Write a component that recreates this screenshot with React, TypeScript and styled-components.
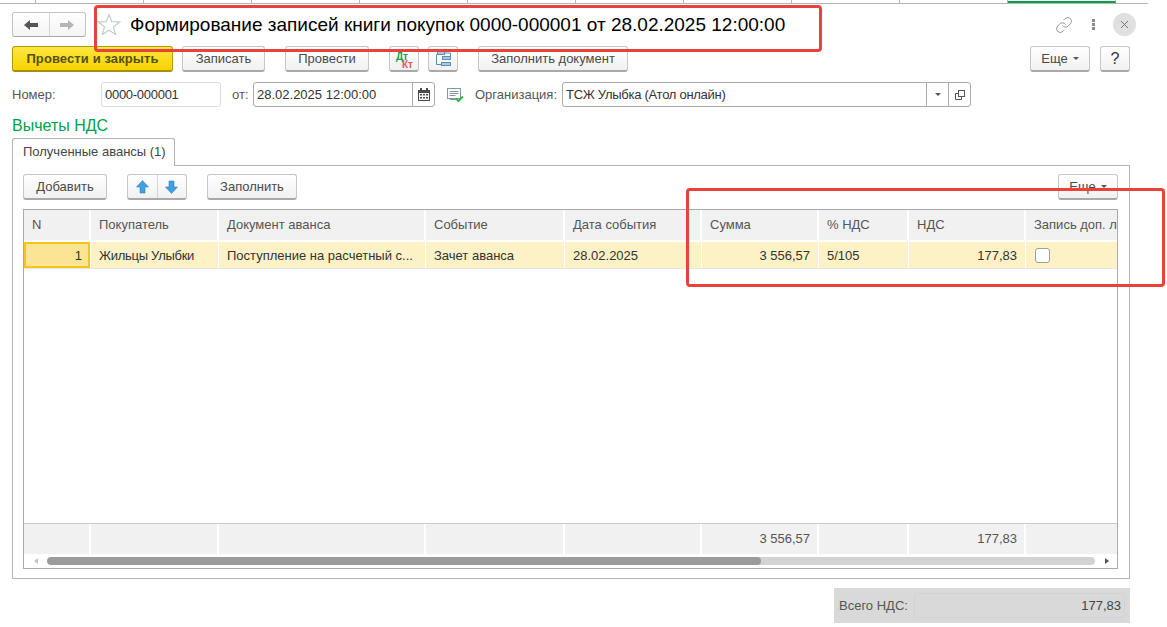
import styled, { createGlobalStyle } from 'styled-components';
import { Link } from 'lucide-react';

const GlobalStyle = createGlobalStyle`
  html, body {
    margin: 0;
    padding: 0;
    background: #fff;
  }
  body {
    font-family: "Liberation Sans", Arial, sans-serif;
    font-size: 13px;
    color: #4a4a4a;
  }
`;

const Page = styled.div`
  position: relative;
  width: 1167px;
  height: 627px;
  overflow: hidden;
  background: #fff;
`;

const TopStrip = styled.div`
  display: flex;
  width: 1148px;
  height: 4px;
  box-sizing: border-box;
  border-bottom: 1px solid #b5b5b5;
`;

const StripCell = styled.div<{ $first?: boolean; $active?: boolean }>`
  box-sizing: border-box;
  flex: 0 0 ${p => (p.$first ? 36 : 108)}px;
  border-right: 1px solid #b5b5b5;
  ${p => p.$active && 'border-bottom: 2px solid #00a04a;'}
`;

const Content = styled.div`
  padding: 8px 37px 0 12px;
  display: flex;
  flex-direction: column;
`;

const TitleRow = styled.div`
  display: flex;
  align-items: center;
  height: 25px;
`;

const NavGroup = styled.div`
  display: flex;
  width: 74px;
  height: 25px;
  box-sizing: border-box;
  border: 1px solid #c4c4c4;
  border-bottom-color: #a8a8a8;
  border-radius: 3px;
  background: linear-gradient(#fff, #f4f4f4);
`;

const NavBtn = styled.div<{ $divided?: boolean }>`
  flex: 1;
  display: flex;
  align-items: center;
  justify-content: center;
  ${p => p.$divided && 'border-left: 1px solid #d4d4d4;'}
`;

const StarWrap = styled.div`
  margin-left: 10px;
  width: 26px;
  height: 25px;
  display: flex;
  align-items: center;
  justify-content: center;
`;

const Title = styled.h1`
  margin: 0 0 0 8px;
  font-size: 19px;
  line-height: 25px;
  font-weight: 400;
  color: #000;
  white-space: nowrap;
  flex: 1;
`;

const LinkIcon = styled(Link)`
  color: #8a8a8a;
  margin-right: 19px;
`;

const Dots = styled.div`
  display: flex;
  flex-direction: column;
  gap: 1px;
  margin-right: 18px;
`;

const Dot = styled.span`
  width: 3px;
  height: 3px;
  background: #8c8c8c;
`;

const CloseBtn = styled.div`
  width: 23px;
  height: 23px;
  border-radius: 50%;
  background: #e0e0e0;
  color: #777;
  display: flex;
  align-items: center;
  justify-content: center;
  margin-right: -6px;
`;

const Toolbar = styled.div`
  display: flex;
  align-items: stretch;
  height: 26px;
  margin-top: 9px;
`;

const Btn = styled.div<{ $w: number; $gap?: number; $primary?: boolean; $push?: boolean }>`
  box-sizing: border-box;
  width: ${p => p.$w}px;
  height: 26px;
  margin-left: ${p => p.$push ? 'auto' : `${p.$gap ?? 0}px`};
  display: flex;
  align-items: center;
  justify-content: center;
  gap: 5px;
  border: 1px solid ${p => (p.$primary ? '#b49b10' : '#c6c6c6')};
  border-bottom: 2px solid ${p => (p.$primary ? '#a88f0c' : '#a9a9a9')};
  border-radius: 3px;
  background: ${p => p.$primary ? 'linear-gradient(#ffe640, #f7d300)' : 'linear-gradient(#fff, #f1f1f1)'};
  color: ${p => (p.$primary ? '#55500f' : '#4a4a4a')};
  font-weight: ${p => (p.$primary ? 700 : 400)};
  letter-spacing: ${p => (p.$primary ? '0.1px' : '0')};
  white-space: nowrap;
`;

const HelpMark = styled.span`
  font-size: 16px;
  color: #333;
`;

const Caret = styled.span`
  width: 0;
  height: 0;
  border-left: 3px solid transparent;
  border-right: 3px solid transparent;
  border-top: 3px solid #555;
`;

const DtKt = styled.div`
  position: relative;
  width: 24px;
  height: 22px;
  font-size: 10px;
  font-weight: 700;
  line-height: 8px;
`;

const Dt = styled.span`
  position: absolute;
  left: 4px;
  top: 5px;
  color: #12a04f;
`;

const Kt = styled.span`
  position: absolute;
  left: 10px;
  top: 13px;
  color: #e8545a;
`;

const FieldRow = styled.div`
  display: flex;
  align-items: center;
  height: 25px;
  margin-top: 10px;
`;

const Label = styled.span<{ $w: number; $gap?: number }>`
  flex: none;
  width: ${p => p.$w}px;
  margin-left: ${p => p.$gap ?? 0}px;
  color: #555;
  white-space: nowrap;
`;

const Field = styled.div<{ $w: number; $soft?: boolean }>`
  flex: none;
  box-sizing: border-box;
  width: ${p => p.$w}px;
  height: 25px;
  display: flex;
  align-items: stretch;
  border: 1px solid ${p => (p.$soft ? '#dcdcdc' : '#a9a9a9')};
  border-radius: 3px;
  background: #fff;
`;

const FieldValue = styled.div<{ $tight?: boolean }>`
  flex: 1;
  display: flex;
  align-items: center;
  padding-left: 3px;
  color: #333;
  white-space: nowrap;
  ${p => p.$tight && 'letter-spacing: -0.28px;'}
`;

const FieldAddon = styled.div<{ $w: number }>`
  width: ${p => p.$w}px;
  border-left: 1px solid #a9a9a9;
  display: flex;
  align-items: center;
  justify-content: center;
`;

const CheckDoc = styled.div`
  margin-left: 12px;
  width: 17px;
  height: 16px;
`;

const SectionTitle = styled.div`
  margin-top: 9px;
  height: 20px;
  line-height: 20px;
  font-size: 16px;
  color: #00a04a;
`;

const Tabs = styled.div`
  margin-top: 2px;
  display: flex;
  margin-bottom: -1px;
  position: relative;
  z-index: 1;
`;

const Tab = styled.div`
  box-sizing: border-box;
  width: 163px;
  height: 28px;
  border: 1px solid #b4b4b4;
  border-bottom: 0;
  border-radius: 3px 3px 0 0;
  background: #fff;
  display: flex;
  align-items: center;
  padding: 0 0 2px 10px;
  color: #444;
  white-space: nowrap;
`;

const Panel = styled.div`
  box-sizing: border-box;
  width: 1118px;
  height: 414px;
  border: 1px solid #b4b4b4;
  padding: 8px 11px 9px 10px;
  display: flex;
  flex-direction: column;
`;

const PanelBar = styled.div`
  display: flex;
  height: 26px;
  margin-bottom: 9px;
`;

const ArrowGroup = styled.div`
  box-sizing: border-box;
  margin-left: 20px;
  width: 60px;
  height: 26px;
  display: flex;
  border: 1px solid #c6c6c6;
  border-bottom: 2px solid #a9a9a9;
  border-radius: 3px;
  background: linear-gradient(#fff, #f1f1f1);
`;

const Grid = styled.div`
  flex: 1;
  box-sizing: border-box;
  border: 1px solid #a9a9a9;
  display: flex;
  flex-direction: column;
  overflow: hidden;
`;

const COLS = '67px 128px 207px 139px 137px 117px 90px 117px 92px';

const HeadRow = styled.div`
  display: grid;
  grid-template-columns: ${COLS};
  height: 32px;
  flex: none;
`;

const HeadCell = styled.div`
  background: #f1f1f1;
  margin: 0 2px 2px 0;
  padding: 0 0 2px 8px;
  display: flex;
  align-items: center;
  color: #555;
  white-space: nowrap;
  overflow: hidden;
  &:last-child {
    margin-right: 0;
  }
`;

const BodyRow = styled.div`
  display: grid;
  grid-template-columns: ${COLS};
  height: 27px;
  flex: none;
  border-bottom: 1px solid #e6e6e6;
  box-sizing: border-box;
`;

const Cell = styled.div<{ $right?: boolean; $focus?: boolean; $tight?: boolean }>`
  background: ${p => (p.$focus ? '#fbe594' : '#fdf1c6')};
  margin-right: 1px;
  display: flex;
  align-items: center;
  justify-content: ${p => (p.$right ? 'flex-end' : 'flex-start')};
  padding: 0 8px;
  color: #333;
  white-space: nowrap;
  overflow: hidden;
  box-sizing: border-box;
  ${p => p.$focus && 'border: 2px solid #f5c518; padding-right: 6px;'}
  ${p => p.$tight && 'letter-spacing: -0.28px;'}
  &:last-child {
    margin-right: 0;
  }
`;

const Checkbox = styled.span`
  width: 15px;
  height: 15px;
  margin-left: 1px;
  box-sizing: border-box;
  background: #fff;
  border: 1px solid #9e9e9e;
  border-radius: 3px;
`;

const Spacer = styled.div`
  flex: 1;
  border-bottom: 1px solid #c8c8c8;
`;

const FootRow = styled.div`
  display: grid;
  grid-template-columns: ${COLS};
  height: 30px;
  flex: none;
`;

const FootCell = styled.div`
  background: #f1f1f1;
  margin-right: 2px;
  display: flex;
  align-items: center;
  justify-content: flex-end;
  padding: 0 7px 2px 0;
  color: #555;
  &:last-child {
    margin-right: 0;
  }
`;

const ScrollBar = styled.div`
  height: 14px;
  flex: none;
  display: flex;
  align-items: center;
  padding: 0 8px 0 10px;
`;

const ScrollTrack = styled.div`
  flex: 1;
  height: 8px;
  margin: 0 10px 0 9px;
  background: #d3d3d3;
  border-radius: 4px;
  overflow: hidden;
`;

const ScrollThumb = styled.div`
  width: 714px;
  height: 8px;
  background: #9b9b9b;
  border-radius: 4px;
`;

const ArrowTip = styled.span<{ $dir: 'left' | 'right' }>`
  width: 0;
  height: 0;
  border-top: 3px solid transparent;
  border-bottom: 3px solid transparent;
  ${p => p.$dir === 'left' ? 'border-right: 4px solid #c4c4c4;' : 'border-left: 4px solid #555;'}
`;

const TotalBar = styled.div`
  box-sizing: border-box;
  margin: 9px 0 0 822px;
  width: 296px;
  height: 35px;
  background: #d9d9d9;
  display: flex;
  align-items: center;
  padding: 0 5px;
  color: #555;
  white-space: nowrap;
`;

const TotalField = styled.div`
  box-sizing: border-box;
  margin-left: 6px;
  flex: 1;
  height: 25px;
  border: 1px solid #d2d2d2;
  border-radius: 3px;
  display: flex;
  align-items: center;
  justify-content: flex-end;
  padding-right: 3px;
  color: #444;
`;

const Annotation = styled.div<{ $x: number; $y: number; $w: number; $h: number }>`
  position: absolute;
  left: ${p => p.$x}px;
  top: ${p => p.$y}px;
  width: ${p => p.$w}px;
  height: ${p => p.$h}px;
  box-sizing: border-box;
  border: 3px solid #e9423a;
  border-radius: 4px;
  pointer-events: none;
`;

const ArrowLeft = ({ color }: { color: string }) => (
  <svg width="14" height="12" viewBox="0 0 14 12">
    <path d="M0 6 L6 1 V4 H14 V8 H6 V11 Z" fill={color} />
  </svg>
);

const ArrowRight = ({ color }: { color: string }) => (
  <svg width="14" height="12" viewBox="0 0 14 12">
    <path d="M14 6 L8 1 V4 H0 V8 H8 V11 Z" fill={color} />
  </svg>
);

const Star = () => (
  <svg width="24" height="23" viewBox="0 0 24 23">
    <path
      d="M12 1.5 L14.8 8.6 L22.6 9 L16.5 13.8 L18.6 21.4 L12 17.2 L5.4 21.4 L7.5 13.8 L1.4 9 L9.2 8.6 Z"
      fill="#fff"
      stroke="#c3c9cf"
      strokeWidth="1.2"
    />
  </svg>
);

const Hierarchy = () => (
  <svg width="15" height="15" viewBox="0 0 15 15" fill="none" stroke="#5b8fb8">
    <path d="M1 3.5 H0.5 V13.5 H5.5 M9 2 H14.5 V5.5" />
    <rect x="1.5" y="0.5" width="7" height="3" fill="#a9c8df" />
    <rect x="6.5" y="5.5" width="8" height="3" fill="#a9c8df" />
    <rect x="5.5" y="11.5" width="9" height="3" fill="#a9c8df" />
  </svg>
);

const Calendar = () => (
  <svg width="12" height="13" viewBox="0 0 12 13">
    <path d="M0 2 H2 V0 H4 V2 H8 V0 H10 V2 H12 V13 H0 Z" fill="#4a4a4a" />
    <rect x="1" y="5" width="10" height="7" fill="#fff" />
    <path d="M2 6h2v1.5H2z M5 6h2v1.5H5z M8 6h2v1.5H8z M2 9h2v1.5H2z M5 9h2v1.5H5z M8 9h2v1.5H8z" fill="#4a4a4a" />
  </svg>
);

const DocCheck = () => (
  <svg width="17" height="16" viewBox="0 0 17 16" fill="none">
    <rect x="0.5" y="1.5" width="13" height="10" fill="#fff" stroke="#7f99ab" />
    <path d="M2.5 4.5 H11.5 M2.5 6.5 H11.5 M2.5 8.5 H8.5 M3 12.5 H9" stroke="#7f99ab" />
    <path d="M9 11.5 L11.5 14 L16 9.5" stroke="#35b44a" strokeWidth="2" />
  </svg>
);

const BlueUp = () => (
  <svg width="13" height="14" viewBox="0 0 13 14">
    <path d="M6.5 0.5 L12.5 7 H9 V13 H4 V7 H0.5 Z" fill="#3f9fe0" stroke="#2d84c2" strokeWidth="0.6" />
  </svg>
);

const BlueDown = () => (
  <svg width="13" height="14" viewBox="0 0 13 14">
    <path d="M6.5 13.5 L12.5 7 H9 V1 H4 V7 H0.5 Z" fill="#3f9fe0" stroke="#2d84c2" strokeWidth="0.6" />
  </svg>
);

const OpenIcon = () => (
  <svg width="12" height="12" viewBox="0 0 12 12" fill="none" stroke="#555">
    <rect x="4.5" y="1.5" width="6" height="6" />
    <path d="M4.5 4.5 H1.5 V10.5 H7.5 V7.5" />
  </svg>
);

const CloseX = () => (
  <svg width="9" height="9" viewBox="0 0 9 9" stroke="currentColor" strokeWidth="1">
    <path d="M1 1 L8 8 M8 1 L1 8" />
  </svg>
);

const stripCells = Array.from({ length: 10 }, (_, i) => i);

export default function App() {
  return (
    <Page>
      <GlobalStyle />
      <TopStrip>
        <StripCell $first />
        {stripCells.map(i => (
          <StripCell key={i} $active={i === 9} />
        ))}
      </TopStrip>
      <Content>
        <TitleRow>
          <NavGroup>
            <NavBtn><ArrowLeft color="#555" /></NavBtn>
            <NavBtn $divided><ArrowRight color="#b5b5b5" /></NavBtn>
          </NavGroup>
          <StarWrap><Star /></StarWrap>
          <Title>Формирование записей книги покупок 0000-000001 от 28.02.2025 12:00:00</Title>
          <LinkIcon size={18} strokeWidth={1.2} />
          <Dots><Dot /><Dot /><Dot /></Dots>
          <CloseBtn><CloseX /></CloseBtn>
        </TitleRow>

        <Toolbar>
          <Btn $w={161} $primary>Провести и закрыть</Btn>
          <Btn $w={83} $gap={9}>Записать</Btn>
          <Btn $w={84} $gap={20}>Провести</Btn>
          <Btn $w={30} $gap={20}>
            <DtKt><Dt>Дт</Dt><Kt>Кт</Kt></DtKt>
          </Btn>
          <Btn $w={30} $gap={9}><Hierarchy /></Btn>
          <Btn $w={150} $gap={20}>Заполнить документ</Btn>
          <Btn $w={60} $push>Еще <Caret /></Btn>
          <Btn $w={30} $gap={10}><HelpMark>?</HelpMark></Btn>
        </Toolbar>

        <FieldRow>
          <Label $w={89}>Номер:</Label>
          <Field $w={120} $soft><FieldValue $tight>0000-000001</FieldValue></Field>
          <Label $w={21} $gap={11}>от:</Label>
          <Field $w={182}>
            <FieldValue>28.02.2025 12:00:00</FieldValue>
            <FieldAddon $w={21}><Calendar /></FieldAddon>
          </Field>
          <CheckDoc><DocCheck /></CheckDoc>
          <Label $w={87} $gap={11}>Организация:</Label>
          <Field $w={409}>
            <FieldValue $tight>ТСЖ Улыбка (Атол онлайн)</FieldValue>
            <FieldAddon $w={21}><Caret /></FieldAddon>
            <FieldAddon $w={21}><OpenIcon /></FieldAddon>
          </Field>
        </FieldRow>

        <SectionTitle>Вычеты НДС</SectionTitle>

        <Tabs><Tab>Полученные авансы (1)</Tab></Tabs>
        <Panel>
          <PanelBar>
            <Btn $w={84}>Добавить</Btn>
            <ArrowGroup>
              <NavBtn><BlueUp /></NavBtn>
              <NavBtn $divided><BlueDown /></NavBtn>
            </ArrowGroup>
            <Btn $w={90} $gap={20}>Заполнить</Btn>
            <Btn $w={60} $push>Еще <Caret /></Btn>
          </PanelBar>
          <Grid>
            <HeadRow>
              <HeadCell>N</HeadCell>
              <HeadCell>Покупатель</HeadCell>
              <HeadCell>Документ аванса</HeadCell>
              <HeadCell>Событие</HeadCell>
              <HeadCell>Дата события</HeadCell>
              <HeadCell>Сумма</HeadCell>
              <HeadCell>% НДС</HeadCell>
              <HeadCell>НДС</HeadCell>
              <HeadCell>Запись доп. л</HeadCell>
            </HeadRow>
            <BodyRow>
              <Cell $right $focus>1</Cell>
              <Cell $tight>Жильцы Улыбки</Cell>
              <Cell>Поступление на расчетный с...</Cell>
              <Cell>Зачет аванса</Cell>
              <Cell>28.02.2025</Cell>
              <Cell $right>3 556,57</Cell>
              <Cell>5/105</Cell>
              <Cell $right>177,83</Cell>
              <Cell><Checkbox /></Cell>
            </BodyRow>
            <Spacer />
            <FootRow>
              <FootCell />
              <FootCell />
              <FootCell />
              <FootCell />
              <FootCell />
              <FootCell>3 556,57</FootCell>
              <FootCell />
              <FootCell>177,83</FootCell>
              <FootCell />
            </FootRow>
            <ScrollBar>
              <ArrowTip $dir="left" />
              <ScrollTrack><ScrollThumb /></ScrollTrack>
              <ArrowTip $dir="right" />
            </ScrollBar>
          </Grid>
        </Panel>

        <TotalBar>
          Всего НДС:
          <TotalField>177,83</TotalField>
        </TotalBar>
      </Content>

      <Annotation $x={94} $y={5} $w={728} $h={47} />
      <Annotation $x={686} $y={188} $w={479} $h={99} />
    </Page>
  );
}
